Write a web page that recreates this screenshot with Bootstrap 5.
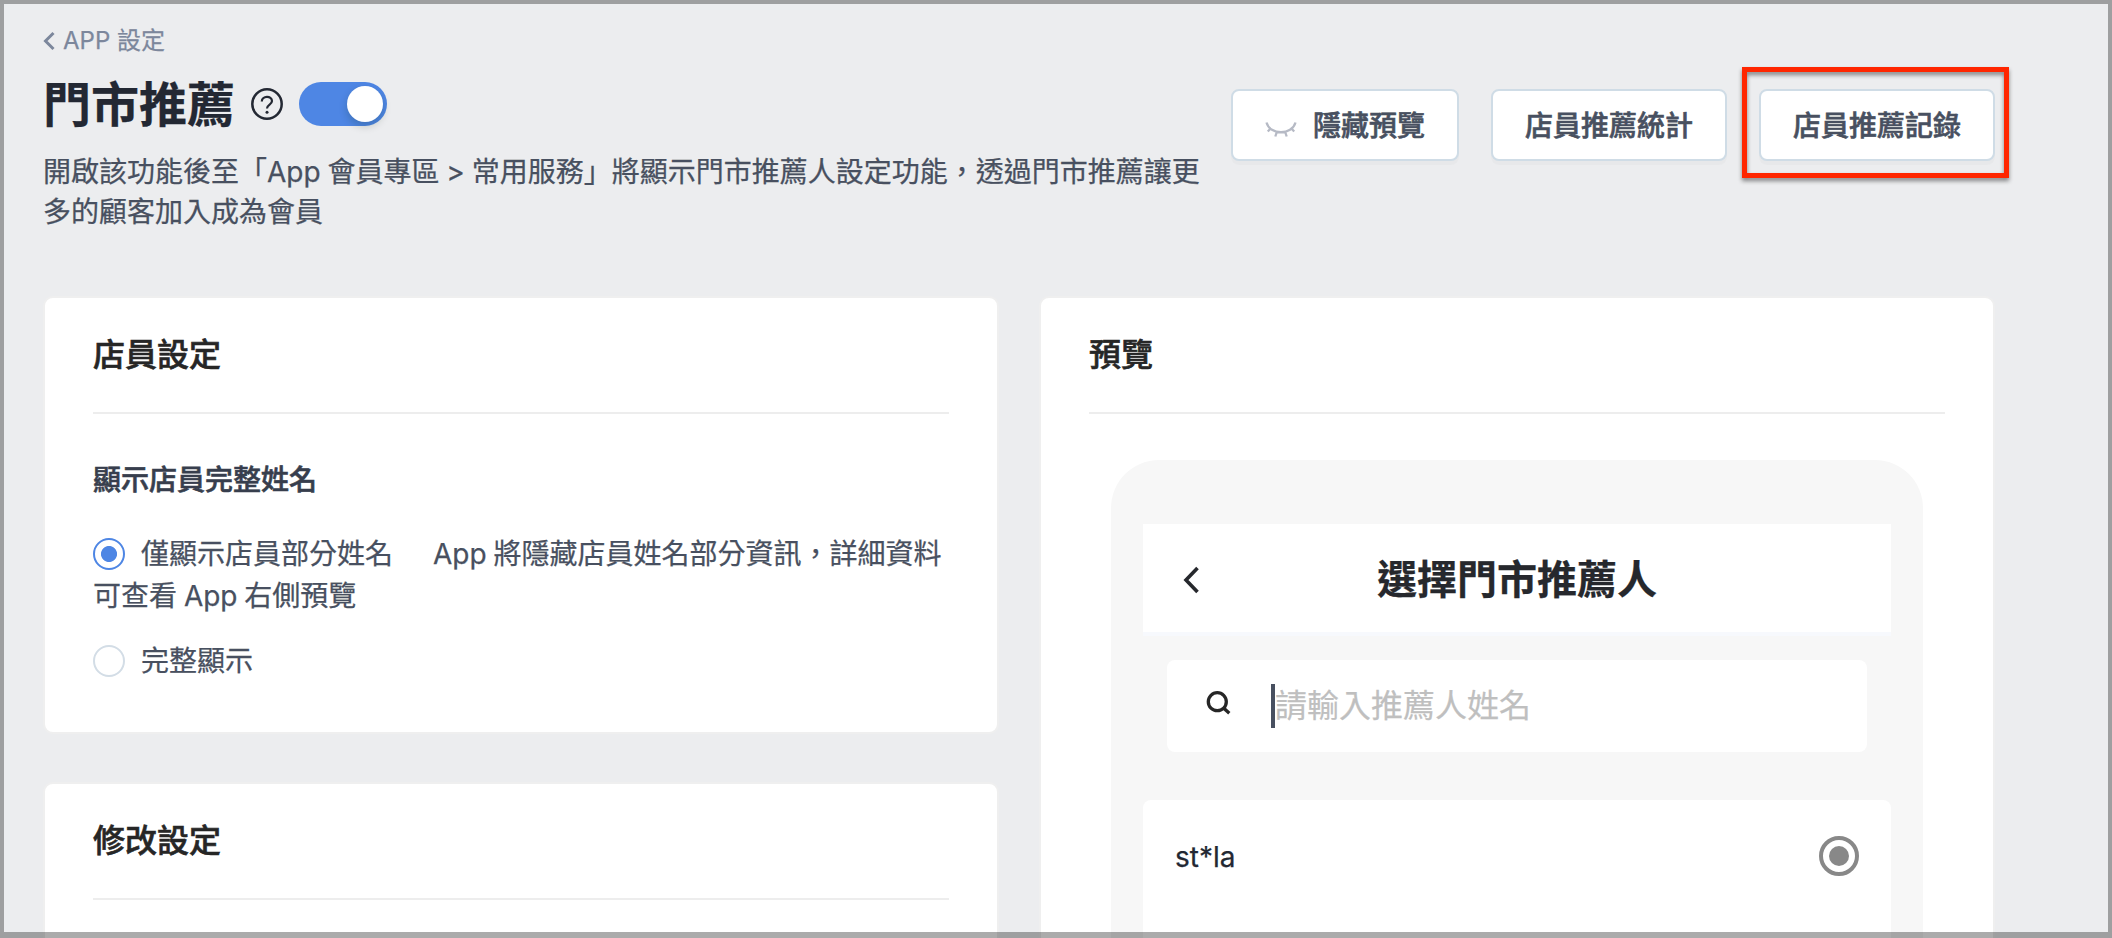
<!DOCTYPE html>
<html lang="zh-Hant">
<head>
<meta charset="utf-8">
<meta name="viewport" content="width=device-width, initial-scale=1">
<title>門市推薦</title>
<link rel="stylesheet" href="https://cdn.jsdelivr.net/npm/bootstrap@5.3.0/dist/css/bootstrap.min.css">
<style>
  body { font-family: Inter, "Noto Sans CJK TC", sans-serif; font-size: 28px; line-height: 42px; color: #485060; background: #ecedef; -webkit-text-stroke: .25px currentColor; word-spacing: -1px; }
  .frame { border: solid rgba(0,0,0,.33); border-width: 4px 4px 6px; z-index: 5; pointer-events: none; }
  .viewport { height: 938px; }
  .page { width: 1995px; padding: 19px 0 0 43px; }
  .crumb { height: 44px; font-size: 24px; line-height: 44px; color: #7c879c; gap: 8px; word-spacing: 0; }
  .topbar { height: 228px; margin-top: 5px; }
  .intro { width: 1164px; }
  .title { font-size: 48px; line-height: 70px; padding-top: 2px; font-weight: 700; color: #232833; }
  .desc { line-height: 40px; margin-top: 12px; }
  .switch { width: 88px; height: 44px; border-radius: 22px; background: #4e86e4; padding: 4px; margin-left: 16px; }
  .knob { width: 36px; height: 36px; background: #fff; box-shadow: 0 4px 8px rgba(0,35,11,.2); }
  .actions { gap: 32px; padding-top: 21px; }
  .btn-tool { height: 72px; border: 2px solid #cfdce6; border-radius: 8px; background: #fff; padding: 2px 32px 0; font-size: 28px; font-weight: 500; color: #485060; box-shadow: 0 4px 0 rgba(0,0,0,.02); }
  .btn-tool, .field, .panel-title { -webkit-text-stroke-width: .6px; }
  .spot { top: -22px; left: -17px; width: 267px; height: 111px; border: 5px solid #ff2600; filter: drop-shadow(0 3px 2px rgba(0,0,0,.45)); }
  .columns { gap: 40px; }
  .panel { width: 956px; border: 2px solid #efefef; border-radius: 10px; background: #fff; padding: 0 48px; }
  .panel-staff { height: 438px; }
  .panel-edit { height: 300px; }
  .panel-title { height: 116px; line-height: 114px; font-size: 32px; font-weight: 500; color: #262626; border-bottom: 2px solid #ededed; }
  .field { line-height: 42px; font-weight: 500; color: #373e4d; margin-top: 45px; }
  .opt1 { margin-top: 32px; }
  .opt2 { margin-top: 23px; }
  .hint { margin-left: 40px; }
  .dot { width: 32px; height: 32px; border: 2px solid #d3dde6; border-radius: 50%; display: inline-block; vertical-align: -6px; margin-right: 16px; }
  .dot.on { border-color: #4e86e4; background: radial-gradient(circle, #4e86e4 7.6px, #fff 8.4px); }
  .phone { width: 812px; height: 500px; margin: 46px auto 0; background: #f7f7f7; border-radius: 48px 48px 0 0; padding: 64px 32px 0; }
  .phone-bar { height: 112px; border-bottom: 4px solid #f7f9fd; background: #fff; color: #26282d; font-size: 40px; font-weight: 700; padding-top: 4px; }
  .back { left: 40px; top: 42px; }
  .search { height: 92px; margin: 24px 24px 0; border-radius: 8px; background: #fff; padding-left: 37px; font-size: 32px; color: #bfbfbf; }
  .caret { width: 4px; height: 44px; background: #485060; margin-left: 39px; }
  .people { height: 150px; margin-top: 48px; border-radius: 8px 8px 0 0; background: #fff; padding: 36px 32px 0; color: #232833; }
</style>
</head>
<body>
<div class="frame position-fixed top-0 start-0 w-100 h-100"></div>
<div class="viewport overflow-hidden">
<main class="page">
  <a class="crumb d-flex align-items-center text-decoration-none" href="#">
    <svg width="12" height="20" viewBox="0 0 12 20" fill="none" stroke="currentColor" stroke-width="3"><path d="M10.500 2 2.500 10l8 8"/></svg>
    <span>APP 設定</span>
  </a>
  <header class="topbar d-flex justify-content-between align-items-start">
    <div class="intro">
      <div class="d-flex align-items-center">
        <h1 class="title m-0">門市推薦</h1>
        <svg class="ms-3" width="32" height="32" viewBox="0 0 32 32" fill="none" stroke="#232833" stroke-width="2.500"><circle cx="16" cy="16" r="14.700"/><path stroke-width="2.200" d="M10.800 13.500c0-6 10.200-6 10.200-.5 0 3.800-5 3.300-5 7.500"/><circle cx="16" cy="24.200" r="1.500" fill="#232833" stroke="none"/></svg>
        <div class="switch d-flex justify-content-end"><span class="knob rounded-circle"></span></div>
      </div>
      <p class="desc mb-0">開啟該功能後至「App 會員專區 &gt; 常用服務」將顯示門市推薦人設定功能，透過門市推薦讓更<br>多的顧客加入成為會員</p>
    </div>
    <div class="actions d-flex flex-shrink-0">
      <button class="btn btn-tool d-flex align-items-center gap-3">
        <svg width="32" height="32" viewBox="0 0 32 32" fill="none" stroke="#b6bac5" stroke-width="2.300"><path d="M1.500 12.500C5 25.500 27 25.500 30.500 12.500M6 18l-3.200 3.500M12 21.500l-1.700 5M20 21.500l1.700 5M26 18l3.200 3.500"/></svg>
        隱藏預覽
      </button>
      <button class="btn btn-tool">店員推薦統計</button>
      <div class="position-relative">
        <button class="btn btn-tool">店員推薦記錄</button>
        <span class="spot position-absolute"></span>
      </div>
    </div>
  </header>
  <div class="columns d-flex align-items-start">
    <div class="d-flex flex-column flex-shrink-0">
      <section class="panel panel-staff">
        <h2 class="panel-title m-0">店員設定</h2>
        <div class="field">顯示店員完整姓名</div>
        <div class="opt1"><span class="dot on"></span>僅顯示店員部分姓名<span class="hint">App 將隱藏店員姓名部分資訊，詳細資料</span><br>可查看 App 右側預覽</div>
        <div class="opt2"><span class="dot"></span>完整顯示</div>
      </section>
      <section class="panel panel-edit mt-5">
        <h2 class="panel-title m-0">修改設定</h2>
      </section>
    </div>
    <section class="panel flex-shrink-0">
      <h2 class="panel-title m-0">預覽</h2>
      <div class="phone">
        <div class="phone-bar position-relative d-flex align-items-center justify-content-center">
          <svg class="back position-absolute" width="17" height="28" viewBox="0 0 17 28" fill="none" stroke="currentColor" stroke-width="3.600"><path d="M14.500 2 3 14l11.500 12"/></svg>
          選擇門市推薦人
        </div>
        <div class="search d-flex align-items-center">
          <svg class="mb-1" width="28" height="28" viewBox="0 0 28 28" fill="none" stroke="#262626" stroke-width="3.300"><circle cx="13.300" cy="11.700" r="9"/><path d="m19 17.500 6.300 5.800"/></svg>
          <span class="caret"></span><span>請輸入推薦人姓名</span>
        </div>
        <div class="people d-flex justify-content-between align-items-start">
          <span>st*la</span>
          <svg width="40" height="40" viewBox="0 0 40 40"><circle cx="20" cy="20" r="18" fill="none" stroke="#888" stroke-width="4"/><circle cx="20" cy="20" r="10" fill="#888"/></svg>
        </div>
      </div>
    </section>
  </div>
</main>
</div>
<script src="https://cdn.jsdelivr.net/npm/bootstrap@5.3.0/dist/js/bootstrap.bundle.min.js"></script>
</body>
</html>
